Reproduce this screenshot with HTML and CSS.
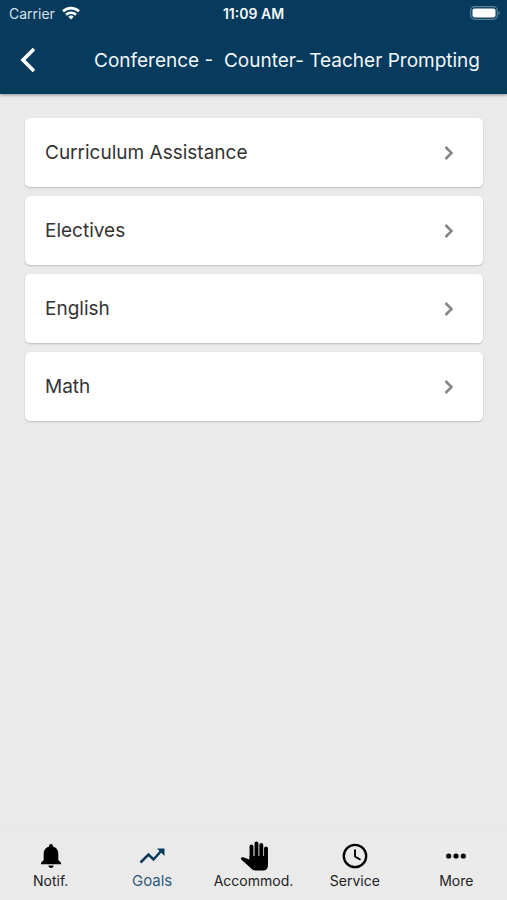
FILE: index.html
```html
<!DOCTYPE html>
<html lang="en">
<head>
    <meta charset="UTF-8">
    <meta name="viewport" content="width=device-width, initial-scale=1.0">
    <title>Conference - Counter- Teacher Prompting</title>
    <link rel="stylesheet" href="styles.css">
</head>
<body>

    <header class="header">
        <div class="status-bar">
            <div class="carrier">
                <span>Carrier</span>
                <svg width="18" height="14" viewBox="0 0 18 14" fill="none" stroke="#fff" stroke-width="2.6">
                    <path d="M1 5.3a11.6 11.6 0 0 1 16 0"/>
                    <path d="M4 8.7a7.3 7.3 0 0 1 10 0"/>
                    <path d="M9 13.5L6.3 10.7a4 4 0 0 1 5.4 0z" fill="#fff" stroke="none"/>
                </svg>
            </div>
            <div class="time">11:09 AM</div>
            <div class="battery">
                <svg width="30" height="14" viewBox="0 0 30 14">
                    <rect x="0.7" y="0.7" width="26.6" height="12.6" rx="4" fill="none" stroke="#5d809a" stroke-width="1.2"/>
                    <rect x="2.5" y="2.5" width="23" height="9" rx="2" fill="#fff"/>
                    <path d="M28.5 5v4q1.4-.6 1.4-2t-1.4-2z" fill="#5d809a"/>
                </svg>
            </div>
        </div>
        <div class="title-bar">
            <button class="back" type="button" aria-label="Back">
                <svg width="16" height="26" viewBox="0 0 16 26" fill="none" stroke="#fff" stroke-width="3.6">
                    <path d="M14 2L3 13l11 11"/>
                </svg>
            </button>
            <h1 class="title">Conference -&nbsp; Counter- Teacher Prompting</h1>
        </div>
    </header>

    <main class="list">
        <button class="card" type="button">
            <span>Curriculum Assistance</span>
            <svg class="chevron" viewBox="0 0 10 16"><path d="M1.5 2l6 6-6 6"/></svg>
        </button>
        <button class="card" type="button">
            <span>Electives</span>
            <svg class="chevron" viewBox="0 0 10 16"><path d="M1.5 2l6 6-6 6"/></svg>
        </button>
        <button class="card" type="button">
            <span>English</span>
            <svg class="chevron" viewBox="0 0 10 16"><path d="M1.5 2l6 6-6 6"/></svg>
        </button>
        <button class="card" type="button">
            <span>Math</span>
            <svg class="chevron" viewBox="0 0 10 16"><path d="M1.5 2l6 6-6 6"/></svg>
        </button>
    </main>

    <nav class="tabs">
        <a class="tab" href="#notif">
            <svg class="icon" viewBox="0 0 32 32" fill="currentColor">
                <path d="M16 4c1.200 0 1.900.8 1.900 1.900v.6c3.400.9 5.400 3.500 5.400 7v6.500l2.700 2.700v1.500H6v-1.500l2.700-2.700v-6.500c0-3.500 2-6.100 5.400-7v-.6C14.100 4.800 14.800 4 16 4z"/>
                <path d="M13.400 25.500h5.200c0 1.500-1.100 2.500-2.600 2.500s-2.600-1-2.600-2.500z"/>
            </svg>
            <span>Notif.</span>
        </a>
        <a class="tab active" href="#goals">
            <svg class="icon" viewBox="0 0 32 32">
                <path d="M4.500 22.500l8-8 5 5 8.500-9.500" fill="none" stroke="currentColor" stroke-width="2.500"/>
                <path d="M21 8.500h7.500V16z" fill="currentColor"/>
            </svg>
            <span>Goals</span>
        </a>
        <a class="tab" href="#accommod">
            <svg class="icon" viewBox="-2 0 32 32">
                <path d="M12.500 18V6.500M17.500 16V3.500M22.300 16V5M27 18V8.500" fill="none" stroke="currentColor" stroke-width="3.900" stroke-linecap="round"/>
                <path d="M10.600 16h18.350v9.500c0 3-1.800 5-4.800 5h-7.500c-2 0-3.500-.8-4.700-2.200l-9.700-8.800c-.8-1.200.2-2.600 1.900-2.200l6.450 2.200z" fill="currentColor"/>
            </svg>
            <span>Accommod.</span>
        </a>
        <a class="tab" href="#service">
            <svg class="icon" viewBox="0 0 32 32" fill="none" stroke="currentColor" stroke-width="2.300">
                <circle cx="16" cy="16" r="11.200"/>
                <path d="M16 9.500v7l5.500 3.300" stroke-width="1.900"/>
            </svg>
            <span>Service</span>
        </a>
        <a class="tab" href="#more">
            <svg class="icon" viewBox="0 0 32 32" fill="currentColor">
                <circle cx="8.700" cy="16" r="2.600"/>
                <circle cx="16" cy="16" r="2.600"/>
                <circle cx="23.300" cy="16" r="2.600"/>
            </svg>
            <span>More</span>
        </a>
    </nav>

</body>
</html>
```
FILE: styles.css
```css
* {
    box-sizing: border-box;
}

body {
    margin: 0;
    min-height: 100vh;
    display: flex;
    flex-direction: column;
    font-family: Inter, "Liberation Sans", sans-serif;
    background-color: #eaeaea;
    color: #333;
}

.header {
    background-color: #063b5d;
    color: #f2f7fa;
    box-shadow: 0 1px 3px rgba(0, 0, 0, 0.4);
}

/* Phone status bar */
.status-bar {
    display: grid;
    grid-template-columns: 1fr auto 1fr;
    align-items: center;
    height: 26px;
    padding: 0 7px;
    font-size: 14px;
}

.carrier {
    display: flex;
    align-items: center;
    gap: 7px;
    padding-left: 2px;
    color: #d5e0e8;
}

.time {
    font-weight: 600;
}

.battery {
    display: flex;
    justify-content: flex-end;
}

.title-bar {
    display: flex;
    align-items: center;
    justify-content: space-between;
    height: 68px;
    padding: 0 27px 0 20px;
}

.back {
    display: flex;
    padding: 0;
    border: none;
    background: none;
    cursor: pointer;
}

.title {
    margin: 0;
    font-size: 19px;
    font-weight: 400;
    white-space: nowrap;
}

/* List of cards */
.list {
    flex: 1;
    display: flex;
    flex-direction: column;
    gap: 9px;
    padding: 24px;
    padding-left: 25px;
}

.card {
    display: flex;
    align-items: center;
    justify-content: space-between;
    height: 69px;
    padding: 0 29px 0 20px;
    border: none;
    border-radius: 5px;
    background-color: #fff;
    box-shadow: 0 1px 2px rgba(0, 0, 0, 0.2);
    color: #333;
    font-family: inherit;
    font-size: 19px;
    text-align: left;
    cursor: pointer;
}

.chevron {
    width: 10px;
    height: 16px;
    fill: none;
    stroke: #858585;
    stroke-width: 2.5;
}

/* Bottom tabs */
.tabs {
    display: grid;
    grid-template-columns: repeat(5, 1fr);
    padding: 12px 0 10px;
    border-top: 1px solid #e6e6e6;
}

.tab {
    display: flex;
    flex-direction: column;
    align-items: center;
    color: #000;
    font-size: 14px;
    line-height: 18px;
    text-decoration: none;
}

.tab span {
    color: #222;
}

.tab.active {
    color: #063b5d;
    font-size: 15px;
}

.tab.active span {
    color: #2f5b7b;
}

.icon {
    width: 32px;
    height: 32px;
}
```
